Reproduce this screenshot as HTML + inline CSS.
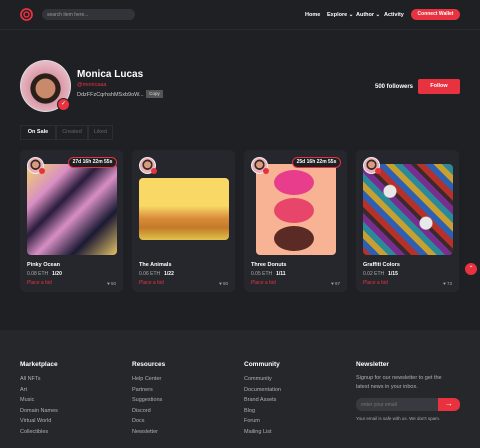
<!DOCTYPE html>
<html><head><style>
*{margin:0;padding:0;box-sizing:border-box}
body{width:480px;height:448px;overflow:hidden;background:#1f2024;font-family:"Liberation Sans",sans-serif;color:#fff;position:relative}
.a{position:absolute}
.hdr{left:0;top:0;width:480px;height:30px;background:#1f2024;border-bottom:1px solid #2a2b30}
.nav{font-size:5.5px;font-weight:bold;top:12px}
.card{background:#26272c;border-radius:5px;width:103px;height:142px;top:150px}
.img{left:7px;top:14px;width:90px;height:91px;border-radius:4px}
.av{left:7px;top:7px;width:17px;height:17px;border-radius:50%;background:radial-gradient(circle at 50% 45%,#d99a80 30%,#3a2a22 32%,#3a2a22 45%,#e8b0b8 47%);border:1px solid #eee}
.av:after{content:"";position:absolute;right:-2px;bottom:-1px;width:6px;height:6px;border-radius:50%;background:#e8323f}
.timer{right:6px;top:7px;width:49px;height:11px;border:1px solid #e8323f;border-radius:6px;background:#1f2024;font-size:5px;font-weight:bold;text-align:center;line-height:9px}
.t1{left:7px;top:112px;font-size:5.5px;font-weight:bold}
.t2{left:7px;top:121px;font-size:5px;color:#aaa}
.t2 b{color:#fff;margin-left:4px}
.t3{left:7px;top:130px;font-size:5px;color:#e8323f}
.lk{right:7px;top:131px;font-size:4.5px;color:#aaa}
.foot{left:0;top:330px;width:480px;height:118px;background:#26272b}
.fh{font-size:6.5px;font-weight:bold;top:31px}
.fl{font-size:5.5px;color:#b0b0b0;line-height:10.5px;top:44px}
</style></head><body>
<div class="a hdr"></div>
<svg class="a" style="left:20px;top:8px" width="13" height="13" viewBox="0 0 13 13"><circle cx="6.5" cy="6.5" r="5.5" fill="none" stroke="#e8323f" stroke-width="1.8"/><circle cx="6.5" cy="6.5" r="2.5" fill="none" stroke="#e8323f" stroke-width="1.5"/></svg>
<div class="a" style="left:42px;top:9px;width:93px;height:11px;background:#33343a;border-radius:6px;font-size:5px;color:#999;padding:3px 5px">search item here...</div>
<div class="a nav" style="left:305px">Home</div>
<div class="a nav" style="left:327px">Explore ⌄</div>
<div class="a nav" style="left:356px">Author ⌄</div>
<div class="a nav" style="left:384px">Activity</div>
<div class="a" style="left:411px;top:9px;width:49px;height:11px;background:#e8323f;border-radius:6px;font-size:5px;font-weight:bold;text-align:center;line-height:11px">Connect Wallet</div>

<div class="a" style="left:20px;top:60px;width:51px;height:52px;border-radius:50%;background:radial-gradient(circle at 50% 55%,#c98a6c 26%,#2b1f1a 28%,#2b1f1a 40%,#d99aa8 42%,#e8b8c4 70%);border:1px solid #ddd"></div>
<div class="a" style="left:57px;top:98px;width:13px;height:13px;border-radius:50%;background:#e8323f;border:1px solid #1f2024;font-size:6px;text-align:center;line-height:11px">✓</div>
<div class="a" style="left:77px;top:69px;font-size:10px;font-weight:bold">Monica Lucas</div>
<div class="a" style="left:77px;top:82px;font-size:5.5px;color:#e8323f">@monicaaa</div>
<div class="a" style="left:77px;top:92px;font-size:5.5px;color:#ccc">DdzFFzCqrhshMSxb9oW...</div>
<div class="a" style="left:146px;top:90px;width:17px;height:8px;background:#555;font-size:4.5px;text-align:center;line-height:8px;color:#ddd">Copy</div>
<div class="a" style="left:375px;top:84px;font-size:6px;font-weight:bold">500 followers</div>
<div class="a" style="left:418px;top:79px;width:42px;height:15px;background:#e8323f;border-radius:2px;font-size:5.5px;font-weight:bold;text-align:center;line-height:15px">Follow</div>

<div class="a" style="left:20px;top:125px;width:36px;height:15px;border:1px solid #2c2d32;font-size:5.5px;font-weight:bold;text-align:center;line-height:13px">On Sale</div>
<div class="a" style="left:56px;top:125px;width:32px;height:15px;border:1px solid #2c2d32;font-size:5.5px;color:#666;text-align:center;line-height:13px">Created</div>
<div class="a" style="left:88px;top:125px;width:25px;height:15px;border:1px solid #2c2d32;font-size:5.5px;color:#666;text-align:center;line-height:13px">Liked</div>

<div class="a card" style="left:20px">
<div class="a img" style="background:linear-gradient(135deg,#f1d36a 0%,#d88fc4 25%,#2a1c3a 40%,#d88fc4 55%,#1a1a33 75%,#e6c266 100%)"></div>
<div class="a av"></div><div class="a timer">27d 16h 22m 55s</div>
<div class="a t1">Pinky Ocean</div><div class="a t2">0.08 ETH<b>1/20</b></div><div class="a t3">Place a bid</div><div class="a lk">♥ 50</div></div>
<div class="a card" style="left:132px">
<div class="a img" style="top:28px;height:62px;background:linear-gradient(180deg,#f8d966 0%,#f8d966 45%,#d98c3a 65%,#c27a28 80%,#e2c24a 100%)"></div>
<div class="a av"></div>
<div class="a t1">The Animals</div><div class="a t2">0.06 ETH<b>1/22</b></div><div class="a t3">Place a bid</div><div class="a lk">♥ 80</div></div>
<div class="a card" style="left:244px">
<div class="a img" style="left:12px;width:80px;background:#f7b393"></div>
<div class="a" style="left:30px;top:20px;width:40px;height:25px;border-radius:50%;background:#e83d8c"></div>
<div class="a" style="left:30px;top:48px;width:40px;height:25px;border-radius:50%;background:#e8456a"></div>
<div class="a" style="left:30px;top:76px;width:40px;height:25px;border-radius:50%;background:#5a2a24"></div>
<div class="a av"></div><div class="a timer">25d 16h 22m 55s</div>
<div class="a t1">Three Donuts</div><div class="a t2">0.05 ETH<b>1/11</b></div><div class="a t3">Place a bid</div><div class="a lk">♥ 97</div></div>
<div class="a card" style="left:356px">
<div class="a img" style="background:radial-gradient(circle at 30% 30%,#e8e8e8 0 6px,transparent 7px),radial-gradient(circle at 70% 65%,#e8e8e8 0 6px,transparent 7px),repeating-linear-gradient(45deg,#b8302a 0 6px,#2f5fb0 6px 12px,#c8a030 12px 18px,#2a8a9a 18px 24px,#7a2d90 24px 30px,#3a2a2a 30px 34px)"></div>
<div class="a av"></div>
<div class="a t1">Graffiti Colors</div><div class="a t2">0.02 ETH<b>1/15</b></div><div class="a t3">Place a bid</div><div class="a lk">♥ 73</div></div>
<div class="a" style="left:465px;top:263px;width:12px;height:12px;border-radius:50%;background:#e8323f;font-size:6px;text-align:center;line-height:12px">⌃</div>

<div class="a foot">
<div class="a fh" style="left:20px">Marketplace</div>
<div class="a fl" style="left:20px">All NFTs<br>Art<br>Music<br>Domain Names<br>Virtual World<br>Collectibles</div>
<div class="a fh" style="left:132px">Resources</div>
<div class="a fl" style="left:132px">Help Center<br>Partners<br>Suggestions<br>Discord<br>Docs<br>Newsletter</div>
<div class="a fh" style="left:244px">Community</div>
<div class="a fl" style="left:244px">Community<br>Documentation<br>Brand Assets<br>Blog<br>Forum<br>Mailing List</div>
<div class="a fh" style="left:356px">Newsletter</div>
<div class="a" style="left:356px;top:44px;font-size:5.5px;color:#b0b0b0;line-height:9px;width:100px">Signup for our newsletter to get the latest news in your inbox.</div>
<div class="a" style="left:356px;top:68px;width:84px;height:13px;background:#393a40;border-radius:6px 0 0 6px;font-size:5px;color:#777;padding:4px 5px">enter your email</div>
<div class="a" style="left:438px;top:68px;width:22px;height:13px;background:#e8323f;border-radius:0 6px 6px 0;font-size:8px;text-align:center;line-height:12px;font-weight:bold">→</div>
<div class="a" style="left:356px;top:86px;font-size:4.5px;color:#aaa">Your email is safe with us. We don't spam.</div>
</div>
</body></html>
